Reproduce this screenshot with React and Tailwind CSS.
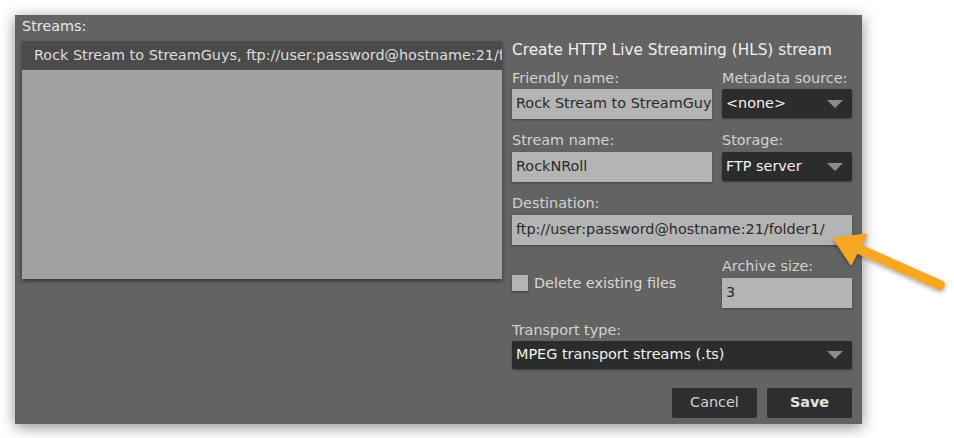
import React from "react";

function Select({ value, className = "" }) {
  return (
    <div
      className={`flex items-center justify-between bg-[#2c2c2c] rounded-[2px] shadow-[0_1px_2px_rgba(0,0,0,0.4)] pl-[4px] pr-[9px] text-[14.4px] text-[#f2f2f2] ${className}`}
    >
      <span className="whitespace-nowrap">{value}</span>
      <svg width="16" height="8" viewBox="0 0 16 8">
        <polygon points="0,0 16,0 8,8" fill="#8c8c8c" />
      </svg>
    </div>
  );
}

function Input({ value, className = "" }) {
  return (
    <div
      className={`flex items-center bg-[#b4b4b4] shadow-[0_1px_2px_rgba(0,0,0,0.35)] pl-[4px] text-[14.4px] text-[#2a2a2a] overflow-hidden whitespace-nowrap h-[30px] ${className}`}
    >
      {value}
    </div>
  );
}

function Label({ children, className = "" }) {
  return (
    <div className={`text-[14.4px] leading-[17px] text-[#d2d2d2] whitespace-nowrap ${className}`}>
      {children}
    </div>
  );
}

export default function App() {
  return (
    <div className="relative w-[954px] h-[438px] bg-white font-['DejaVu_Sans',sans-serif] overflow-hidden">
      <div className="absolute left-0 top-0 w-full h-full pt-[15px] pl-[15px]">
        <div className="flex w-[847px] h-[409px] bg-[#636363] shadow-[0_3px_14px_rgba(0,0,0,0.45)]">
          {/* Left column */}
          <div className="flex flex-col w-[487px] pl-[7px] pt-[3px]">
            <div className="text-[14.4px] leading-[17px] text-[#e6e6e6]">Streams:</div>
            <div className="mt-[6px] w-[480px] h-[238px] bg-[#a1a1a1] shadow-[0_2px_4px_rgba(0,0,0,0.5)] flex flex-col">
              <div className="h-[29px] bg-[#4b4b4b] flex items-center pl-[12px] overflow-hidden whitespace-nowrap text-[14.4px] text-[#dcdcdc]">
                Rock Stream to StreamGuys, ftp://user:password@hostname:21/folder1/
              </div>
            </div>
          </div>

          {/* Right column */}
          <div className="flex flex-col ml-[10px] w-[340px] pt-[26px]">
            <div className="text-[15.3px] leading-[18px] text-[#f0f0f0] whitespace-nowrap">
              Create HTTP Live Streaming (HLS) stream
            </div>

            <div className="flex gap-[10px] mt-[11px]">
              <div className="flex flex-col w-[200px]">
                <Label>Friendly name:</Label>
                <Input value="Rock Stream to StreamGuys" className="mt-[2px]" />
              </div>
              <div className="flex flex-col w-[130px]">
                <Label>Metadata source:</Label>
                <Select value="<none>" className="mt-[2px] h-[29px]" />
              </div>
            </div>

            <div className="flex gap-[10px] mt-[13px]">
              <div className="flex flex-col w-[200px]">
                <Label>Stream name:</Label>
                <Input value="RockNRoll" className="mt-[3px]" />
              </div>
              <div className="flex flex-col w-[130px]">
                <Label>Storage:</Label>
                <Select value="FTP server" className="mt-[3px] h-[29px]" />
              </div>
            </div>

            <div className="flex flex-col mt-[13px]">
              <Label>Destination:</Label>
              <Input value="ftp://user:password@hostname:21/folder1/" className="mt-[3px]" />
            </div>

            <div className="flex gap-[10px] mt-[13px]">
              <div className="flex items-start w-[200px] pt-[17px]">
                <div className="w-[16px] h-[16px] bg-[#b4b4b4] shadow-[0_1px_2px_rgba(0,0,0,0.35)]" />
                <span className="ml-[6px] text-[14.4px] leading-[17px] mt-[0px] text-[#d8d8d8] whitespace-nowrap">
                  Delete existing files
                </span>
              </div>
              <div className="flex flex-col w-[130px]">
                <Label>Archive size:</Label>
                <Input value="3" className="mt-[3px]" />
              </div>
            </div>

            <div className="flex flex-col mt-[14px]">
              <Label>Transport type:</Label>
              <Select value="MPEG transport streams (.ts)" className="mt-[2px] h-[28px]" />
            </div>

            <div className="flex justify-end gap-[10px] mt-[19px]">
              <div className="w-[85px] h-[30px] bg-[#2e2e2e] rounded-[2px] flex items-center justify-center text-[14.4px] text-[#d2d2d2]">
                Cancel
              </div>
              <div className="w-[85px] h-[30px] bg-[#2e2e2e] rounded-[2px] flex items-center justify-center text-[14.4px] font-bold text-[#e4e4e4]">
                Save
              </div>
            </div>
          </div>
        </div>
      </div>

      {/* Annotation arrow */}
      <svg className="absolute left-0 top-0" width="954" height="438" viewBox="0 0 954 438">
        <defs>
          <filter id="sh" x="-20%" y="-20%" width="140%" height="140%">
            <feDropShadow dx="0" dy="2" stdDeviation="2" floodColor="#000" floodOpacity="0.35" />
          </filter>
        </defs>
        <g filter="url(#sh)" fill="#f7a823" stroke="#f7a823">
          <line x1="940" y1="285" x2="852" y2="246" strokeWidth="10" strokeLinecap="round" />
          <polygon points="833,238 867,234 851,265" strokeWidth="1" strokeLinejoin="round" />
        </g>
      </svg>
    </div>
  );
}
